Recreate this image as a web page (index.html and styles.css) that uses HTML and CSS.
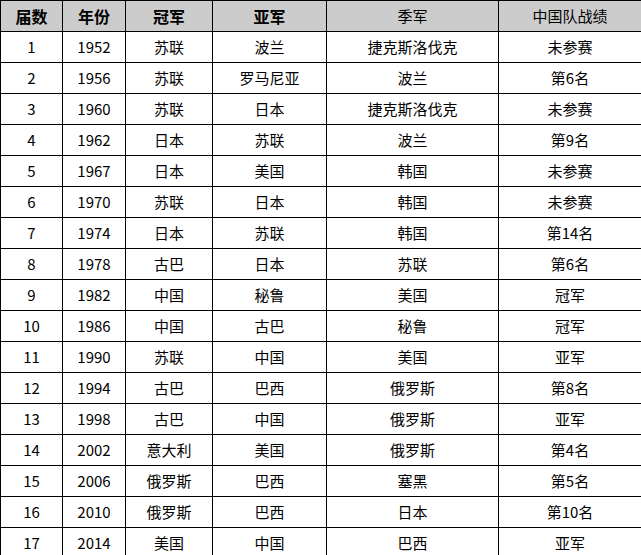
FILE: index.html
```html
<!DOCTYPE html>
<html lang="zh">
<head>
<meta charset="utf-8">
<link rel="stylesheet" href="styles.css">
</head>
<body>
<table class="results">
<colgroup>
<col class="c1"><col class="c2"><col class="c3"><col class="c4"><col class="c5"><col class="c6">
</colgroup>
<thead>
<tr><th class="b">届数</th><th class="b">年份</th><th class="b">冠军</th><th class="b">亚军</th><th>季军</th><th>中国队战绩</th></tr>
</thead>
<tbody>
<tr><td>1</td><td>1952</td><td>苏联</td><td>波兰</td><td>捷克斯洛伐克</td><td>未参赛</td></tr>
<tr><td>2</td><td>1956</td><td>苏联</td><td>罗马尼亚</td><td>波兰</td><td>第6名</td></tr>
<tr><td>3</td><td>1960</td><td>苏联</td><td>日本</td><td>捷克斯洛伐克</td><td>未参赛</td></tr>
<tr><td>4</td><td>1962</td><td>日本</td><td>苏联</td><td>波兰</td><td>第9名</td></tr>
<tr><td>5</td><td>1967</td><td>日本</td><td>美国</td><td>韩国</td><td>未参赛</td></tr>
<tr><td>6</td><td>1970</td><td>苏联</td><td>日本</td><td>韩国</td><td>未参赛</td></tr>
<tr><td>7</td><td>1974</td><td>日本</td><td>苏联</td><td>韩国</td><td>第14名</td></tr>
<tr><td>8</td><td>1978</td><td>古巴</td><td>日本</td><td>苏联</td><td>第6名</td></tr>
<tr><td>9</td><td>1982</td><td>中国</td><td>秘鲁</td><td>美国</td><td>冠军</td></tr>
<tr><td>10</td><td>1986</td><td>中国</td><td>古巴</td><td>秘鲁</td><td>冠军</td></tr>
<tr><td>11</td><td>1990</td><td>苏联</td><td>中国</td><td>美国</td><td>亚军</td></tr>
<tr><td>12</td><td>1994</td><td>古巴</td><td>巴西</td><td>俄罗斯</td><td>第8名</td></tr>
<tr><td>13</td><td>1998</td><td>古巴</td><td>中国</td><td>俄罗斯</td><td>亚军</td></tr>
<tr><td>14</td><td>2002</td><td>意大利</td><td>美国</td><td>俄罗斯</td><td>第4名</td></tr>
<tr><td>15</td><td>2006</td><td>俄罗斯</td><td>巴西</td><td>塞黑</td><td>第5名</td></tr>
<tr><td>16</td><td>2010</td><td>俄罗斯</td><td>巴西</td><td>日本</td><td>第10名</td></tr>
<tr><td>17</td><td>2014</td><td>美国</td><td>中国</td><td>巴西</td><td>亚军</td></tr>
</tbody>
</table>
</body>
</html>
```
FILE: styles.css
```css
html, body {
  margin: 0;
  padding: 0;
  background: #ffffff;
}
body {
  font-family: "Noto Sans CJK SC", "DejaVu Sans", sans-serif;
  font-size: 15px;
  color: #000;
}
.results {
  border-collapse: collapse;
  table-layout: fixed;
  width: 641px;
}
.c1 { width: 62px; }
.c2 { width: 63px; }
.c3 { width: 87px; }
.c4 { width: 114px; }
.c5 { width: 172px; }
.c6 { width: 143px; }
.results th,
.results td {
  border: 1px solid #000;
  text-align: center;
  vertical-align: middle;
  padding: 0;
  height: 30px;
  line-height: 20px;
}
.results th {
  background: #cccccc;
  font-weight: normal;
}
.results th.b {
  font-weight: bold;
  font-size: 16px;
}
```
